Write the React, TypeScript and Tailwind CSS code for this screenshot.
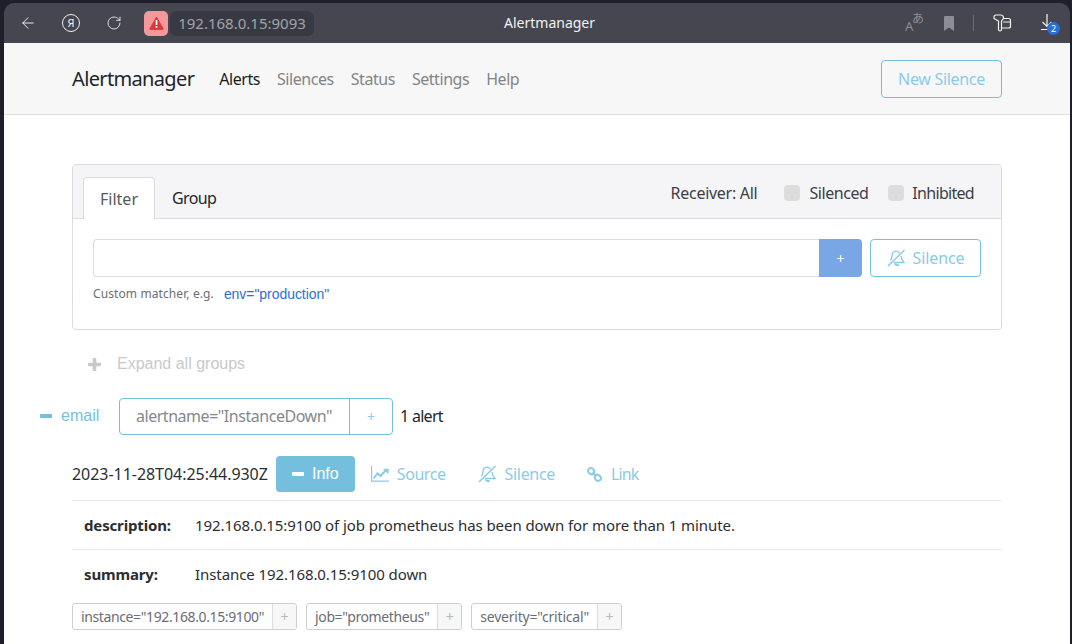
import { ArrowLeft, RotateCw } from 'lucide-react'

const sans = "font-['Noto_Sans',sans-serif]"
const arial = "font-['Liberation_Sans',sans-serif]"

const tags = [
  { label: 'instance="192.168.0.15:9100"', text: 'tracking-[-0.38px]' },
  { label: 'job="prometheus"', text: 'tracking-[-0.38px]' },
  { label: 'severity="critical"', text: 'tracking-[-0.2px]' },
]

function ChainIcon() {
  return (
    <svg width="15" height="15" viewBox="0 0 15 15" fill="none" stroke="currentColor" strokeWidth="2">
      <ellipse cx="4.2" cy="4.2" rx="3.2" ry="2.8" transform="rotate(40 4.2 4.2)" />
      <ellipse cx="10.8" cy="10.8" rx="3.2" ry="2.8" transform="rotate(40 10.8 10.8)" />
      <path d="M5.5 5.5l4 4" />
    </svg>
  )
}

function BellSlashIcon() {
  return (
    <svg width="19" height="18" viewBox="0 0 19 18" fill="none" stroke="currentColor" strokeWidth="1.3">
      <path d="M1 17L17.5 1" strokeWidth="1.5" />
      <path d="M12.5 4.5C11.5 2 8 1 6 3.5 4.5 5.5 5.5 8.5 3.5 11.5" />
      <path d="M14 7c.3 2.5 1 4.5 3 6.5H6.5" />
      <path d="M8 14.5a2 2 0 0 0 3.6.8" strokeWidth="2" />
    </svg>
  )
}

function ChartIcon() {
  return (
    <svg width="18" height="16" viewBox="0 0 18 16" fill="none" stroke="currentColor">
      <path d="M.6 0v15.2H18" strokeWidth="1.2" />
      <path d="M2.5 12.5l4-5 3 2.500 5.500-6" strokeWidth="2" />
      <path d="M12.500 3h4.800v4.800z" fill="currentColor" strokeWidth="0.5" />
    </svg>
  )
}

function BrowserBar() {
  return (
    <div className="h-[40px] shrink-0 rounded-t-[10px] bg-[#45464f] flex items-center text-white relative">
      <ArrowLeft className="w-[18px] h-[18px] ml-[15px] text-[#f0f0f0]" strokeWidth={1.3} />
      <div className="ml-[25px] w-[18px] h-[18px] rounded-full border border-[#f0f0f0] flex items-center justify-center text-[11px] text-[#f0f0f0]">
        Я
      </div>
      <RotateCw className="w-[16px] h-[16px] ml-[26px] text-[#f0f0f0]" strokeWidth={1.3} />
      <div className="ml-[22px] w-[24px] h-[25px] rounded-[5px] bg-[#f4989c] flex items-center justify-center">
        <svg width="15" height="14" viewBox="0 0 15 14">
          <path d="M7.500 1L14 12.500a.6.6 0 0 1-.5.9H1.500a.6.6 0 0 1-.5-.9z" fill="#d93a3f" stroke="#d93a3f" strokeLinejoin="round" />
          <rect x="6.700" y="4" width="1.700" height="5" fill="#fff" />
          <rect x="6.700" y="10" width="1.700" height="1.700" fill="#fff" />
        </svg>
      </div>
      <div className={`ml-[2px] h-[25px] w-[144px] rounded-[6px] bg-[#383a43] flex items-center justify-center text-[15px] text-[#a3a4a9] ${sans}`}>
        192.168.0.15:9093
      </div>
      <div className={`absolute left-[500px] top-[11px] text-[14px] leading-[18px] text-[#f2f2f2] ${sans}`}>Alertmanager</div>
      <div className="ml-auto flex items-center">
        <div className="relative w-[20px] h-[20px] text-[#8d8e94]">
          <span className={`absolute left-0 top-[6px] text-[13px] leading-[14px] ${sans}`}>A</span>
          <span className="absolute left-[7px] top-[-2px] text-[12px] leading-[14px] font-['Noto_Sans_CJK_JP',sans-serif]">あ</span>
        </div>
        <svg className="ml-[19px]" width="10" height="15" viewBox="0 0 10 15">
          <path d="M0 1a1 1 0 0 1 1-1h8a1 1 0 0 1 1 1v14l-5-3.500L0 15z" fill="#8d8e94" />
        </svg>
        <div className="w-px h-[16px] bg-[#6a6b72] ml-[19px]" />
        <svg className="ml-[19px]" width="19" height="19" viewBox="0 0 19 19" fill="none" stroke="#f2f2f2" strokeWidth="1.2">
          <path d="M3 1h4.500a3 3 0 0 1 3 3v.5L8.500 7v8.500a1.500 1.500 0 0 1-3 0V7L1 4.500V3a2 2 0 0 1 2-2z" />
          <path d="M10.500 4.500h5a2 2 0 0 1 2 2V12a2 2 0 0 1-2 2H8.500M10 8h7.500" />
        </svg>
        <div className="relative ml-[28px] mr-[18px] w-[12px] h-[20px]">
          <svg width="14" height="18" viewBox="0 0 14 18" fill="none" stroke="#f2f2f2" strokeWidth="1.2">
            <path d="M7 1v12M2.500 9L7 13.500 11.500 9M1 16.500h9" />
          </svg>
          <span className={`absolute left-[7px] top-[9px] w-[13px] h-[13px] rounded-full bg-[#2a6fd6] text-[9px] leading-[13px] text-center text-white ${sans}`}>2</span>
        </div>
      </div>
    </div>
  )
}

function NavBar() {
  return (
    <div className={`h-[72px] shrink-0 bg-[#f7f7f7] border-b border-[#dedede] pl-[68px] pr-[68px] flex items-center ${sans}`}>
      <span className="text-[20px] leading-[28px] text-[#212529] mr-[25px] tracking-[-0.65px]">Alertmanager</span>
      <nav className="flex gap-[17px] text-[16px] leading-[24px] text-[#838486] tracking-[-0.45px]">
        <span className="text-[#1c1c1e]">Alerts</span>
        <span>Silences</span>
        <span>Status</span>
        <span>Settings</span>
        <span>Help</span>
      </nav>
      <button className="ml-auto w-[121px] h-[38px] rounded-[4px] border border-[#75bfde] text-[16px] text-[#8ccbe6] tracking-[-0.3px]">New Silence</button>
    </div>
  )
}

function FilterCard() {
  return (
    <div className="h-[166px] rounded-[4px] border border-[#dcdcdf]">
      <div className="h-[54px] rounded-t-[4px] bg-[#f5f5f7] border-b border-[#dcdcdf] flex items-end pl-[10px] text-[16px]">
        <div className="h-[42px] -mb-px w-[72px] bg-white border border-b-0 border-[#dcdcdf] rounded-t-[4px] flex items-center justify-center text-[#55595d]">
          Filter
        </div>
        <div className="h-[41px] ml-[17px] flex items-center text-[#212529] tracking-[-0.65px]">Group</div>
        <div className="ml-auto h-[54px] flex items-center pr-[27px] text-[#3c3f43] pt-[3px]">
          <span className="tracking-[-0.28px]">Receiver: All</span>
          <span className="ml-[27px] w-[16px] h-[16px] rounded-[4px] bg-[#dcdcdc]" />
          <span className="ml-[9px] tracking-[-0.45px]">Silenced</span>
          <span className="ml-[20px] w-[16px] h-[16px] rounded-[4px] bg-[#dcdcdc]" />
          <span className="ml-[8px] tracking-[-0.7px]">Inhibited</span>
        </div>
      </div>
      <div className="pt-[20px] px-[20px]">
        <div className="flex h-[38px]">
          <div className="flex-1 rounded-l-[4px] border border-r-0 border-[#dcdcdf]" />
          <button className="w-[43px] rounded-r-[4px] bg-[#79a6e5] text-white text-[14px]">+</button>
          <button className="ml-[8px] w-[111px] rounded-[4px] border border-[#75bfde] text-[16px] text-[#8ccbe6] flex items-center justify-center gap-[7px] tracking-[-0.1px]">
            <BellSlashIcon />
            Silence
          </button>
        </div>
        <div className="mt-[8px] flex items-center h-[18px]">
          <span className="text-[12px] text-[#6a6e73] tracking-[0.1px]">Custom matcher, e.g.</span>
          <span className={`ml-[10px] text-[14px] text-[#2d6fd2] tracking-[-0.05px] ${arial}`}>env="production"</span>
        </div>
      </div>
    </div>
  )
}

function AlertGroup() {
  return (
    <>
      <div className="mt-[23px] ml-[-32px] h-[36px] flex items-center">
        <span className="w-[12px] h-[4px] rounded-[1px] bg-[#75bfde]" />
        <span className={`ml-[9px] w-[58px] text-[16px] text-[#75bfde] ${arial}`}>email</span>
        <div className="h-[37px] flex rounded-[4px] border border-[#75bfde]">
          <span className="pl-[16px] flex items-center text-[16px] text-[#85888c] border-r border-[#75bfde] w-[230px] tracking-[-0.47px]">alertname="InstanceDown"</span>
          <span className="w-[42px] flex items-center justify-center text-[#8ccbe6] text-[14px]">+</span>
        </div>
        <span className="ml-[7px] text-[16px] text-[#212529] tracking-[-0.7px]">1 alert</span>
      </div>
      <div className="mt-[22px] h-[36px] flex items-center text-[16px]">
        <span className="text-[#2b2e31] tracking-[-0.04px]">2023-11-28T04:25:44.930Z</span>
        <button className={`ml-[8px] w-[79px] h-[36px] rounded-[4px] bg-[#75bfde] text-white flex items-center justify-center gap-[8px] ${arial}`}>
          <span className="w-[12px] h-[4px] rounded-[1px] bg-white" />
          Info
        </button>
        <div className="flex items-center text-[#8ccbe6]">
          <span className="ml-[16px]"><ChartIcon /></span>
          <span className="ml-[8px] tracking-[-0.45px]">Source</span>
          <span className="ml-[32px]"><BellSlashIcon /></span>
          <span className="ml-[8px] tracking-[-0.3px]">Silence</span>
          <span className="ml-[32px]"><ChainIcon /></span>
          <span className="ml-[9px] tracking-[-0.9px]">Link</span>
        </div>
      </div>
      <div className="mt-[8px] border-t border-[#e9e9ea]">
        <div className="h-[49px] flex items-center pl-[12px] text-[15px] text-[#2b2e31] border-b border-[#e9e9ea]">
          <b className="w-[111px] font-bold tracking-[-0.15px]">description:</b>
          <span className="tracking-[-0.08px]">192.168.0.15:9100 of job prometheus has been down for more than 1 minute.</span>
        </div>
        <div className="h-[49px] flex items-center pl-[12px] text-[15px] text-[#2b2e31]">
          <b className="w-[111px] font-bold tracking-[-0.15px]">summary:</b>
          <span className="tracking-[-0.08px]">Instance 192.168.0.15:9100 down</span>
        </div>
      </div>
      <div className="mt-[4px] flex gap-[9px] text-[14px] text-[#6a6e73]">
        {tags.map((tag) => (
          <div key={tag.label} className="h-[27px] flex rounded-[3px] border border-[#cfcfd2]">
            <span className={`px-[8px] flex items-center ${tag.text}`}>{tag.label}</span>
            <span className="w-[24px] flex items-center justify-center bg-[#f7f7f7] border-l border-[#dcdcdf] rounded-r-[3px] text-[#b9b9bb]">+</span>
          </div>
        ))}
      </div>
    </>
  )
}

export default function App() {
  return (
    <div className={`w-[1072px] h-[644px] overflow-hidden bg-[#1e1f2a] pt-[3px] pl-[4px] pr-[2px] flex flex-col ${sans}`}>
      <BrowserBar />
      <NavBar />
      <div className="flex-1 bg-white px-[68px] pt-[49px]">
        <FilterCard />
        <div className="mt-[23px] h-[22px] flex items-center ml-[16px] text-[#c9c9c9]">
          <svg width="13" height="13" viewBox="0 0 13 13" fill="currentColor">
            <rect x="4.700" width="3.600" height="13" rx="0.8" />
            <rect y="4.700" width="13" height="3.600" rx="0.8" />
          </svg>
          <span className={`ml-[16px] text-[16px] ${arial}`}>Expand all groups</span>
        </div>
        <AlertGroup />
      </div>
    </div>
  )
}
